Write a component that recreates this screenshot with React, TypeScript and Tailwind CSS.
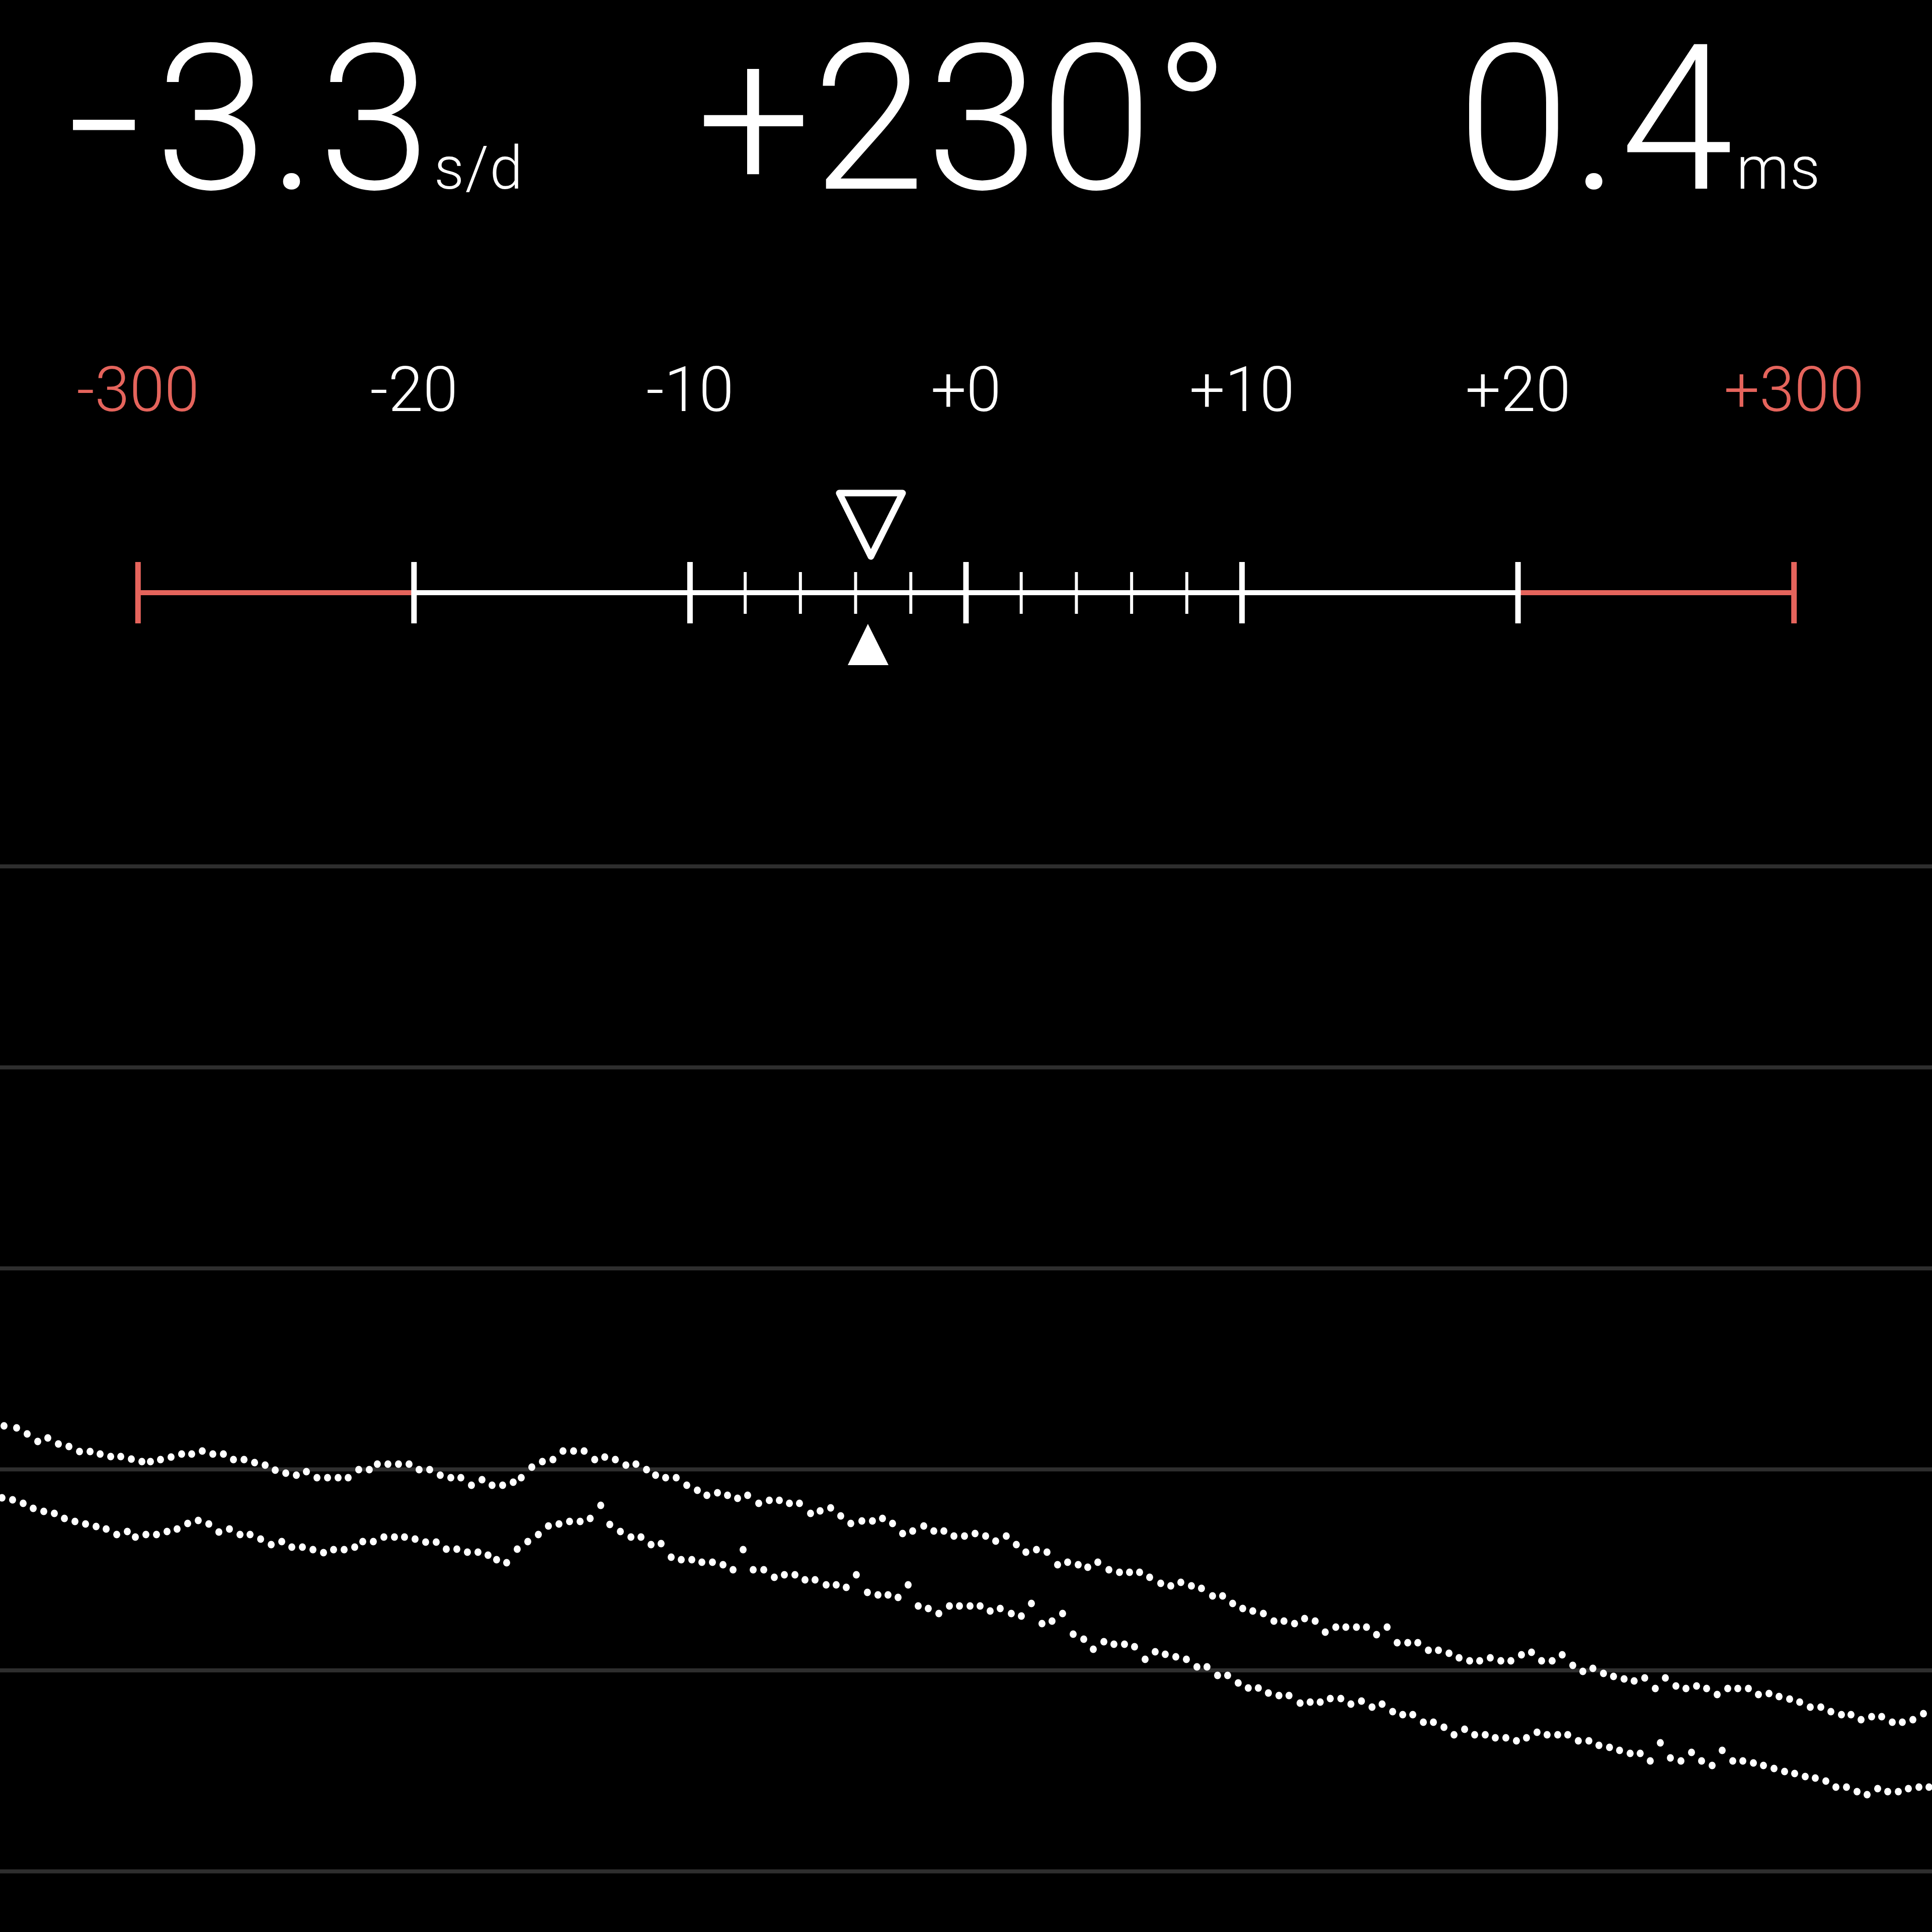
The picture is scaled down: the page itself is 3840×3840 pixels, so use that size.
import React from 'react';

// dot series traced from the reference (x, y in page pixels)
const upperRaw = `8,2834 33,2838 54,2850 75,2865 95,2858 116,2870 137,2875 158,2885 179,2885 199,2890 220,2895 240,2895 261,2900 282,2905 299,2905 319,2901 340,2896 361,2890 381,2890 402,2884 423,2890 444,2890 464,2901 485,2901 506,2907 527,2912 547,2922 568,2928 589,2932 609,2925 630,2937 651,2937 672,2937 692,2937 713,2921 734,2921 750,2910 771,2910 792,2910 813,2910 833,2921 854,2921 875,2932 896,2937 916,2937 937,2952 958,2941 978,2952 999,2952 1020,2946 1036,2937 1057,2916 1078,2905 1099,2901 1119,2884 1140,2884 1161,2884 1182,2901 1202,2896 1223,2901 1244,2912 1264,2910 1285,2921 1303,2932 1323,2937 1344,2937 1365,2952 1386,2962 1405,2972 1426,2967 1446,2972 1466,2978 1486,2972 1508,2988 1529,2982 1549,2982 1569,2988 1589,2988 1611,3008 1630,3003 1651,2997 1671,3013 1691,3028 1713,3023 1734,3023 1754,3018 1774,3028 1794,3048 1814,3043 1836,3033 1856,3043 1876,3043 1896,3053 1917,3053 1938,3048 1959,3053 1979,3063 2000,3053 2020,3070 2039,3085 2060,3080 2081,3085 2102,3110 2122,3105 2143,3110 2162,3115 2182,3105 2204,3120 2225,3125 2245,3125 2265,3125 2285,3135 2307,3147 2327,3152 2347,3145 2368,3152 2388,3157 2410,3172 2430,3172 2450,3187 2470,3197 2490,3202 2511,3207 2532,3222 2552,3222 2573,3227 2593,3217 2614,3222 2634,3244 2655,3234 2675,3234 2696,3234 2716,3234 2736,3249 2757,3234 2777,3265 2798,3265 2818,3265 2839,3280 2859,3280 2880,3286 2900,3295 2921,3301 2941,3301 2962,3295 2983,3301 3003,3301 3024,3289 3044,3284 3064,3301 3085,3301 3105,3289 3126,3310 3146,3322 3166,3316 3187,3326 3207,3332 3228,3337 3248,3341 3269,3335 3290,3356 3310,3335 3331,3351 3351,3356 3372,3351 3392,3356 3413,3368 3434,3356 3454,3356 3475,3356 3495,3368 3516,3366 3536,3372 3557,3377 3577,3383 3598,3393 3619,3393 3639,3402 3660,3408 3679,3408 3699,3418 3720,3412 3740,3412 3761,3423 3781,3423 3802,3418 3823,3406`;

const lowerRaw = `4,2977 25,2981 46,2988 66,2998 87,3004 108,3008 128,3018 149,3024 170,3029 191,3034 211,3039 232,3050 253,3044 269,3055 290,3050 311,3050 332,3044 352,3039 373,3028 394,3022 415,3029 435,3045 456,3039 477,3050 497,3050 518,3059 539,3070 560,3064 580,3075 601,3075 622,3080 643,3086 663,3080 684,3080 705,3075 721,3064 742,3064 763,3055 784,3055 804,3055 825,3059 846,3065 867,3065 887,3079 908,3079 929,3085 950,3085 970,3091 987,3100 1007,3106 1028,3079 1049,3064 1070,3050 1090,3033 1111,3029 1132,3024 1153,3024 1173,3018 1194,2992 1212,3030 1233,3044 1254,3055 1274,3055 1294,3070 1314,3068 1334,3095 1354,3100 1375,3100 1395,3105 1416,3105 1437,3110 1457,3120 1477,3080 1497,3120 1518,3120 1539,3135 1559,3130 1580,3130 1600,3140 1620,3140 1642,3150 1662,3150 1682,3155 1702,3130 1724,3165 1745,3170 1765,3170 1785,3175 1805,3150 1825,3192 1845,3197 1866,3207 1887,3192 1907,3192 1928,3192 1948,3192 1968,3202 1988,3197 2010,3207 2030,3212 2050,3187 2071,3227 2091,3222 2112,3207 2133,3248 2154,3258 2173,3278 2194,3263 2214,3268 2235,3268 2255,3273 2276,3298 2296,3283 2316,3288 2337,3293 2358,3298 2379,3313 2399,3313 2420,3330 2440,3330 2461,3345 2481,3355 2501,3355 2521,3365 2542,3370 2562,3370 2584,3385 2604,3383 2624,3383 2644,3376 2665,3376 2685,3387 2706,3381 2727,3393 2747,3387 2768,3402 2788,3408 2808,3408 2829,3423 2849,3423 2870,3433 2890,3448 2911,3437 2931,3448 2952,3448 2972,3454 2993,3454 3014,3460 3034,3454 3055,3443 3075,3448 3096,3448 3116,3448 3137,3460 3158,3460 3178,3469 3199,3473 3219,3479 3240,3485 3260,3485 3280,3500 3300,3464 3320,3494 3341,3500 3362,3483 3382,3500 3403,3509 3423,3479 3444,3500 3464,3500 3485,3504 3505,3509 3526,3515 3547,3521 3567,3525 3588,3531 3608,3534 3629,3540 3649,3552 3670,3552 3691,3561 3711,3567 3732,3555 3752,3561 3773,3561 3793,3555 3814,3552 3834,3552`;

const parse = (s: string) => s.split(' ').map((p) => p.split(',').map(Number));
const upper = parse(upperRaw);
const lower = parse(lowerRaw);

const step = 3840 / 7;
const major = [0, 1, 2, 3, 4, 5, 6].map((i) => step / 2 + i * step);
const minor = [1, 2, 3, 4, 6, 7, 8, 9].map((i) => major[2] + (i * step) / 5);
const gridY = [0, 1, 2, 3, 4, 5].map((i) => 1722 + i * 399.5);

const labels = [
    { t: '-300', red: true },
    { t: '-20' },
    { t: '-10' },
    { t: '+0' },
    { t: '+10' },
    { t: '+20' },
    { t: '+300', red: true },
];

const RED = '#e5645c';

function Unit({ children }: { children: React.ReactNode }) {
    return <span className="text-[118px] leading-none font-light ml-[4px]">{children}</span>;
}

export default function App() {
    return (
        <div className="w-[3840px] h-[3840px] bg-black text-white overflow-hidden flex flex-col font-['Roboto','Liberation_Sans',sans-serif]">
            {/* readings */}
            <div className="h-[712px] grid grid-cols-3 items-start pt-[35px] text-[404px] leading-none font-light tracking-[2px]">
                <div className="flex items-baseline pl-[150px]">
                    <span className="inline-block scale-x-[1.3]">-</span>
                    <span className="ml-[40px]">3.3</span>
                    <Unit>s/d</Unit>
                </div>
                <div className="flex items-baseline justify-center pr-[8px]">
                    <span>+230°</span>
                </div>
                <div className="flex items-baseline justify-center pl-[116px]">
                    <span>0.4</span>
                    <Unit>ms</Unit>
                </div>
            </div>

            {/* scale labels */}
            <div className="grid grid-cols-7 text-center text-[125px] leading-none font-light">
                {labels.map((l) => (
                    <span key={l.t} className={l.red ? 'text-[#e5645c]' : 'text-white'}>
                        {l.t}
                    </span>
                ))}
            </div>

            {/* scale */}
            <svg className="mt-[63px] shrink-0" width={3840} height={480} viewBox="0 900 3840 480">
                <line x1={major[0]} y1={1178} x2={major[1]} y2={1178} stroke={RED} strokeWidth={10} />
                <line x1={major[1]} y1={1178} x2={major[5]} y2={1178} stroke="#fff" strokeWidth={10} />
                <line x1={major[5]} y1={1178} x2={major[6]} y2={1178} stroke={RED} strokeWidth={10} />
                {major.map((x, i) => (
                    <line key={i} x1={x} y1={1117} x2={x} y2={1239} stroke={i === 0 || i === 6 ? RED : '#fff'} strokeWidth={11} />
                ))}
                {minor.map((x, i) => (
                    <line key={i} x1={x} y1={1137} x2={x} y2={1220} stroke="#fff" strokeWidth={6} />
                ))}
                <polygon points="1668,980 1794,980 1731,1106" fill="none" stroke="#fff" strokeWidth={13} strokeLinejoin="round" />
                <polygon points="1725,1240 1766,1322 1685,1322" fill="#fff" />
            </svg>

            {/* history chart */}
            <svg className="shrink-0" width={3840} height={2460} viewBox="0 1380 3840 2460">
                {gridY.map((y) => (
                    <line key={y} x1={0} y1={y} x2={3840} y2={y} stroke="#2e2e2e" strokeWidth={8} />
                ))}
                {upper.map(([x, y], i) => (
                    <ellipse key={'u' + i} cx={x} cy={y} rx={7} ry={7.5} fill="#fff" />
                ))}
                {lower.map(([x, y], i) => (
                    <ellipse key={'l' + i} cx={x} cy={y} rx={7} ry={7.5} fill="#fff" />
                ))}
            </svg>
        </div>
    );
}
